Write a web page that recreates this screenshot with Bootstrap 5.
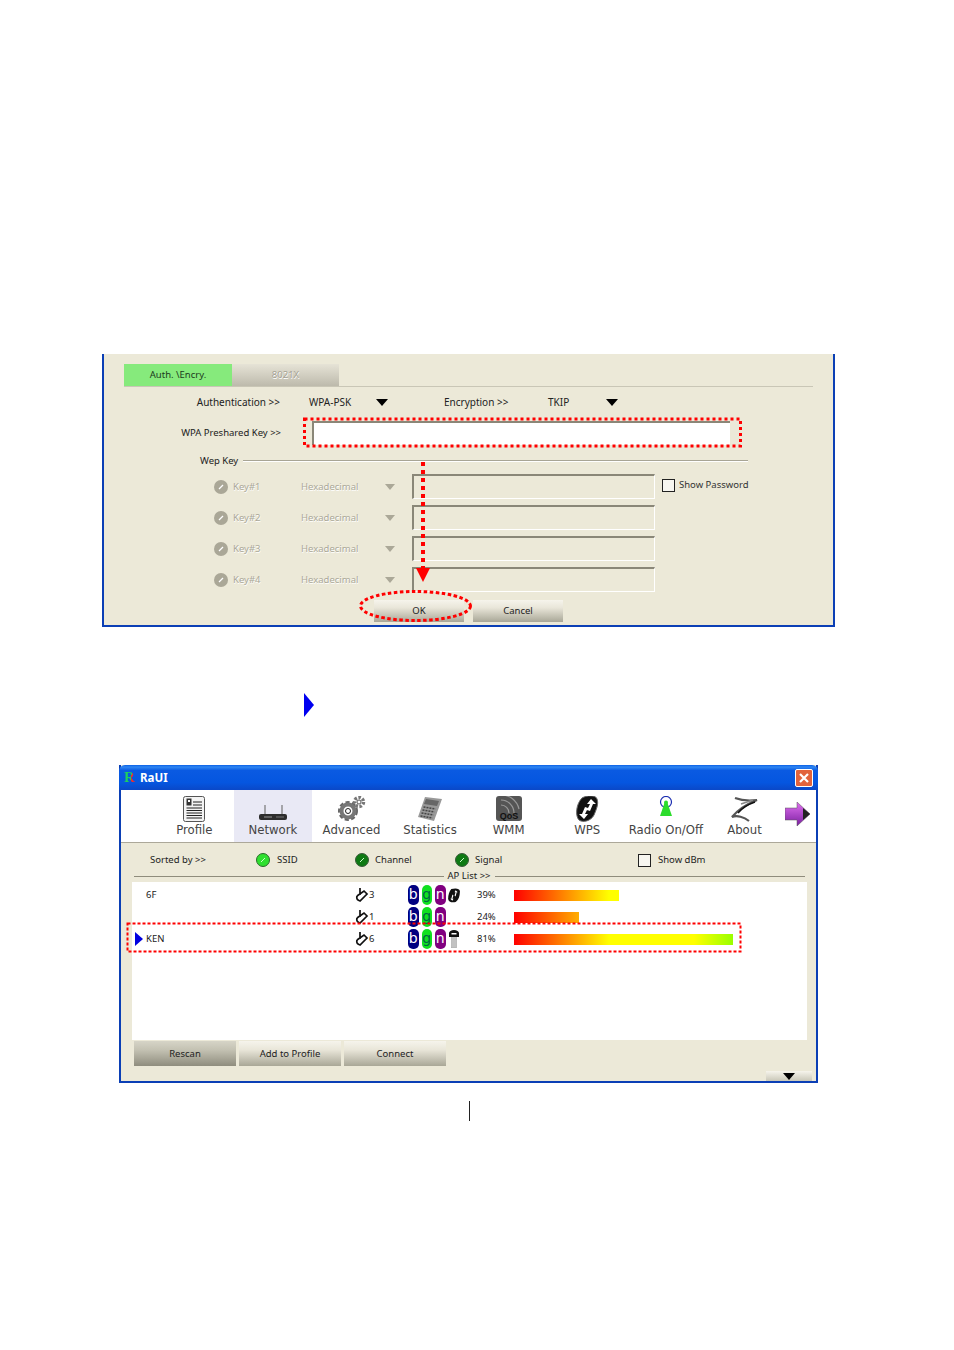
<!DOCTYPE html>
<html lang="en">
<head>
    <meta charset="UTF-8">
    <meta name="viewport" content="width=device-width, initial-scale=1.0">
    <title>RaUI</title>
    <link href="https://cdn.jsdelivr.net/npm/bootstrap@5.3.0/dist/css/bootstrap.min.css" rel="stylesheet">
    <style>
        body { background: #fff; color: #222; font-family: "Noto Sans", sans-serif; font-size: 9.5px; line-height: 1; }
        .sheet { width: 954px; height: 1350px; padding-top: 354px; overflow: hidden; }
        .dlg { background: #ece9d8; border: 2px solid #0b3fb5; border-top: 0; position: relative; }
        .dlg-auth { width: 733px; height: 273px; margin-left: 102px; padding: 10px 0 0 20px; }
        .dlg-ap { width: 699px; height: 318px; margin-left: 119px; }
        .overlay { position: absolute; left: 0; top: 0; pointer-events: none; }

        .tab-strip { width: 689px; height: 23px; border-bottom: 1px solid #c9c6b6; }
        .tab-on { width: 108px; background: #86ea7c; color: #1c3a1c; }
        .tab-off { width: 107px; background: linear-gradient(#e6e3d6, #bdbaac); color: #a5a294; text-shadow: .5px .5px 0 #fff; }
        .auth-row { height: 18px; margin-top: 6px; font-size: 10px; }
        .psk-row { height: 24px; margin-top: 10px; }
        .psk-label { width: 157px; }
        .psk-input { width: 418px; height: 24px; margin-left: 31px; background: #fff; border-top: 2px solid #8a8778; border-left: 2px solid #8a8778; }
        .wep-legend { height: 16px; margin-top: 8px; margin-left: 76px; width: 548px; gap: 5px; }
        .rule { height: 2px; background: #a8a595; border-bottom: 1px solid #fff; }
        .key-list { margin-top: 5px; gap: 6px; margin-left: 90px; }
        .key-row { height: 25px; color: #aba898; text-shadow: .5px .5px 0 #fff; }
        .key-input { width: 243px; height: 25px; margin-left: 17px; border-top: 2px solid #8a8778; border-left: 2px solid #8a8778; border-right: 1px solid #fff; border-bottom: 1px solid #fff; }
        .tickbox { width: 13px; height: 13px; background: #f7f6f0; border: 1px solid #222; flex: none; }
        .key-row .tickbox { margin: 0 0 3px 7px; }
        .show-pass { color: #333; margin: 0 0 3px 4px; text-shadow: none; }
        .xp-btn { background: linear-gradient(#f6f4ec, #e9e6d9 35%, #a9a797); border: 0; border-radius: 0; padding: 0; color: #222; font-size: 9.5px; line-height: 1; }
        .xp-btn:hover { background: linear-gradient(#f6f4ec, #e9e6d9 35%, #a9a797); color: #222; }
        .xp-btn.pressed { background: linear-gradient(#d6d4c7, #c4c2b3 35%, #8f8d7e); }
        .foot-btns { margin-top: 8px; margin-left: 250px; gap: 9px; }
        .foot-btns .xp-btn { width: 90px; height: 22px; }

        .mid-arrow { width: 0; height: 0; margin: 66px 0 48px 304px; border-left: 10px solid #0000f0; border-top: 12px solid transparent; border-bottom: 12px solid transparent; }

        .title-bar { height: 25px; margin: 0 -2px; padding: 0 4px 0 5px; border-radius: 6px 6px 0 0; background: linear-gradient(#0a5fe6 0, #2f86f2 8%, #0a5ae2 22%, #0556e0 70%, #0a48c8 100%); color: #fff; font-size: 11.5px; font-weight: 700; }
        .logo-r { background: linear-gradient(100deg, #1fd05a 62%, #e83030 62%); -webkit-background-clip: text; background-clip: text; color: transparent; font-family: "Liberation Serif", serif; font-size: 15px; margin-right: 5px; width: 11px; }
        .close-x { width: 18px; height: 18px; margin-left: auto; margin-right: 1px; background: #e2633c; border: 1px solid #fff; border-radius: 2px; }
        .tool-bar { height: 53px; background: #fff; border-bottom: 1px solid #aca899; padding-left: 34px; }
        .tool-cell { width: 78.6px; height: 52px; padding-top: 6px; font-family: "DejaVu Sans", sans-serif; font-size: 11.7px; color: #444; }
        .tool-cell.active { background: #e9e9f5; }
        .tool-cell span { margin-top: 3px; white-space: nowrap; }
        .tool-icon { width: 30px; height: 26px; display: block; }
        .next-arrow { margin-left: 1px; margin-top: 12px; }
        .filter-row { height: 27px; padding-top: 7px; }
        .radio-dot { width: 14px; height: 14px; display: block; flex: none; }
        .ap-legend { height: 12px; margin: 0 11px 0 13px; }
        .ap-legend span { padding: 0 4px 0 3px; }
        .ap-legend .rule { height: 1px; background: #8f8c7c; border: 0; }
        .ap-list { height: 158px; margin: 0 9px 0 11px; padding-top: 2px; background: #fff; }
        .ap-row { height: 22px; display: grid; grid-template-columns: 14px 209px 53px 69px 37px 1fr; align-items: center; }
        .cur-arrow { width: 0; height: 0; margin-left: 3px; border-left: 8px solid #0000e0; border-top: 7px solid transparent; border-bottom: 7px solid transparent; }
        .pill { width: 10.5px; height: 20px; margin-right: 3px; border-radius: 5px; font-size: 14px; font-family: "DejaVu Sans", sans-serif; color: #fff; padding-bottom: 3px; }
        .pill-b { background: #000080; }
        .pill-g { background: #10e020; color: #064; }
        .pill-n { background: #800080; }
        .sig-bar { height: 11px; background: linear-gradient(90deg, #f00 0, #ff0 95px, #ff0 180px, #9f0 219px) no-repeat; background-size: 219px 100%; }
        .foot-row { margin: 1px 0 0 13px; gap: 3px; }
        .foot-row .xp-btn { width: 102px; height: 25px; }
        .more-btn { width: 46px; height: 10px; margin: 5px 4px 0 auto; background: linear-gradient(#f6f4ec, #c9c7b8); }
        .caret-down { width: 0; height: 0; border-left: 6px solid transparent; border-right: 6px solid transparent; border-top: 7px solid #000; }
        .caret-grey { border-left-width: 5.5px; border-right-width: 5.5px; border-top: 6px solid #aba898; }
        .cut-mark { width: 1px; height: 20px; margin: 18px 0 0 469px; background: #222; }
    </style>
</head>
<body>
<div class="sheet">

    <!-- authentication dialog -->
    <div class="dlg dlg-auth">
        <div class="tab-strip d-flex">
            <div class="tab-on d-flex align-items-center justify-content-center">Auth. \Encry.</div>
            <div class="tab-off d-flex align-items-center justify-content-center">8021X</div>
        </div>

        <div class="auth-row d-flex align-items-center">
            <div class="text-end text-nowrap" style="width:156px">Authentication &gt;&gt;</div>
            <div style="width:67px;margin-left:29px">WPA-PSK</div>
            <div class="caret-down"></div>
            <div class="text-nowrap" style="width:65px;margin-left:56px">Encryption &gt;&gt;</div>
            <div style="width:58px;margin-left:39px">TKIP</div>
            <div class="caret-down"></div>
        </div>

        <div class="psk-row d-flex align-items-center">
            <div class="psk-label text-end text-nowrap">WPA Preshared Key &gt;&gt;</div>
            <div class="psk-input"></div>
        </div>

        <div class="wep-legend d-flex align-items-center">
            <span class="text-nowrap">Wep Key</span>
            <div class="rule flex-grow-1"></div>
        </div>

        <div class="key-list d-flex flex-column">
            <div class="key-row d-flex align-items-center">
                <svg class="radio-dot" viewBox="0 0 14 14"><circle cx="7" cy="7" r="7" fill="#aaa797"/><path d="M5 9l4-4" stroke="#fff" stroke-width="1.2"/></svg>
                <span style="width:68px;margin-left:5px">Key#1</span>
                <span style="width:84px">Hexadecimal</span>
                <div class="caret-down caret-grey"></div>
                <div class="key-input"></div>
                <div class="tickbox"></div>
                <span class="show-pass text-nowrap">Show Password</span>
            </div>
            <div class="key-row d-flex align-items-center">
                <svg class="radio-dot" viewBox="0 0 14 14"><circle cx="7" cy="7" r="7" fill="#aaa797"/><path d="M5 9l4-4" stroke="#fff" stroke-width="1.2"/></svg>
                <span style="width:68px;margin-left:5px">Key#2</span>
                <span style="width:84px">Hexadecimal</span>
                <div class="caret-down caret-grey"></div>
                <div class="key-input"></div>
            </div>
            <div class="key-row d-flex align-items-center">
                <svg class="radio-dot" viewBox="0 0 14 14"><circle cx="7" cy="7" r="7" fill="#aaa797"/><path d="M5 9l4-4" stroke="#fff" stroke-width="1.2"/></svg>
                <span style="width:68px;margin-left:5px">Key#3</span>
                <span style="width:84px">Hexadecimal</span>
                <div class="caret-down caret-grey"></div>
                <div class="key-input"></div>
            </div>
            <div class="key-row d-flex align-items-center">
                <svg class="radio-dot" viewBox="0 0 14 14"><circle cx="7" cy="7" r="7" fill="#aaa797"/><path d="M5 9l4-4" stroke="#fff" stroke-width="1.2"/></svg>
                <span style="width:68px;margin-left:5px">Key#4</span>
                <span style="width:84px">Hexadecimal</span>
                <div class="caret-down caret-grey"></div>
                <div class="key-input"></div>
            </div>
        </div>

        <div class="foot-btns d-flex">
            <button type="button" class="btn xp-btn">OK</button>
            <button type="button" class="btn xp-btn">Cancel</button>
        </div>

        <!-- red marks drawn over the dialog -->
        <svg class="overlay" width="733" height="273" viewBox="104 354 733 273">
            <rect x="304.5" y="419" width="436" height="27" fill="none" stroke="#f00" stroke-width="3" stroke-dasharray="3 3"/>
            <line x1="423" y1="462" x2="423" y2="570" stroke="#f00" stroke-width="4" stroke-dasharray="4 4"/>
            <polygon points="416,568 430,568 423,582" fill="#f00"/>
            <ellipse cx="415.5" cy="606" rx="55" ry="14.5" fill="none" stroke="#f00" stroke-width="3" stroke-dasharray="3.5 2.5"/>
        </svg>
    </div>

    <div class="mid-arrow"></div>

    <!-- access point list window -->
    <div class="dlg dlg-ap">
        <div class="title-bar d-flex align-items-center">
            <span class="logo-r">R</span><span>RaUI</span>
            <div class="close-x d-flex align-items-center justify-content-center">
                <svg width="12" height="12" viewBox="0 0 12 12"><path d="M2 2l8 8M10 2l-8 8" stroke="#fff" stroke-width="2.2"/></svg>
            </div>
        </div>

        <div class="tool-bar d-flex">
            <div class="tool-cell d-flex flex-column align-items-center">
                <svg class="tool-icon" viewBox="0 0 30 26"><rect x="4.5" y="0.5" width="21" height="25" rx="2" fill="#f4f4f4" stroke="#555"/><path d="M7.500 2.500h5v7h-5z" fill="#333"/><path d="M9 4h2v2h-2z" fill="#fff"/><path d="M14 6h9M14 9h9M7.500 12h15.500M7.500 14.500h15.500M7.500 17h15.500M7.500 19.500h15.500M7.500 22h15.500" stroke="#222" stroke-width="1.2"/></svg>
                <span>Profile</span>
            </div>
            <div class="tool-cell active d-flex flex-column align-items-center">
                <svg class="tool-icon" viewBox="0 0 30 26"><path d="M7 19v-10M24 19v-10" stroke="#777" stroke-width="1.200"/><rect x="1" y="18" width="28" height="6" rx="2" fill="#2d2d2d"/><path d="M6 21h8" stroke="#999"/><path d="M18 21h8" stroke="#777"/></svg>
                <span>Network</span>
            </div>
            <div class="tool-cell d-flex flex-column align-items-center">
                <svg class="tool-icon" viewBox="0 0 30 26">
                    <circle cx="12" cy="15" r="7.500" fill="none" stroke="#666" stroke-width="5" stroke-dasharray="3.500 2"/>
                    <circle cx="12" cy="15" r="6.500" fill="none" stroke="#777" stroke-width="4"/>
                    <circle cx="12" cy="15" r="2.500" fill="#fff" stroke="#222"/>
                    <circle cx="23" cy="6" r="4.500" fill="none" stroke="#777" stroke-width="3.500" stroke-dasharray="2.500 1.500"/>
                    <circle cx="23" cy="6" r="2" fill="#fff" stroke="#333" stroke-width=".8"/>
                </svg>
                <span>Advanced</span>
            </div>
            <div class="tool-cell d-flex flex-column align-items-center">
                <svg class="tool-icon" viewBox="0 0 30 26"><polygon points="10,1 27,3 19,25 3,21" fill="#999"/><polygon points="11,3 24,5 22,10 9,8" fill="#666"/><path d="M8.500 11l12 2M7.500 14l12 2M6.500 17l12 2M5.500 20l12 2" stroke="#444" stroke-width="1.500" stroke-dasharray="2 1"/></svg>
                <span>Statistics</span>
            </div>
            <div class="tool-cell d-flex flex-column align-items-center">
                <svg class="tool-icon" viewBox="0 0 30 26"><rect x="2" y="0" width="26" height="25" rx="3" fill="#555"/><path d="M6 14a8 8 0 0 1 8 8M6 9a13 13 0 0 1 13 13M6 4a18 18 0 0 1 18 14" fill="none" stroke="#999" stroke-width="1.200" transform="translate(1 -5)"/><text x="15" y="23" text-anchor="middle" font-family="Liberation Sans, sans-serif" font-size="9" font-weight="700" fill="#111">QoS</text></svg>
                <span>WMM</span>
            </div>
            <div class="tool-cell d-flex flex-column align-items-center">
                <svg class="tool-icon" viewBox="0 0 30 26"><path d="M10 2C15 -1 24 -1 25 3C27 8 24 14 22 19C19 25 11 27 7 24C3 20 4 8 10 2Z" fill="#111" stroke="#666"/><path d="M19 3l5 5h-3l-3 7-3-1 3-6h-3zM12 23l-5-5h3l3-7 3 1-3 6h3z" fill="#fff"/></svg>
                <span>WPS</span>
            </div>
            <div class="tool-cell d-flex flex-column align-items-center">
                <svg class="tool-icon" viewBox="0 0 30 26"><circle cx="15" cy="6" r="5.500" fill="#fff" stroke="#1a2cb0" stroke-width="1.200"/><polygon points="13.500,7 16.500,7 21,20 9,20" fill="#2cdc2c"/><circle cx="15" cy="6.500" r="2" fill="#2cdc2c"/></svg>
                <span>Radio On/Off</span>
            </div>
            <div class="tool-cell d-flex flex-column align-items-center">
                <svg class="tool-icon" viewBox="0 0 30 26"><path d="M6 2C14 5 20 5 28 4C18 8 8 15 3 21C8 19 15 21 20 25" fill="none" stroke="#555" stroke-width="2.200"/><path d="M9 17C14 11 20 8 26 6" fill="none" stroke="#111" stroke-width="1.500"/><path d="M12 8L24 4" stroke="#888" stroke-width="1.500"/></svg>
                <span>About</span>
            </div>
            <svg class="next-arrow" width="25" height="25" viewBox="0 0 25 25"><defs><linearGradient id="arrowFill" x1="0" y1="0" x2="0" y2="1"><stop offset="0" stop-color="#e070f0"/><stop offset="1" stop-color="#7a1fa0"/></linearGradient></defs><polygon points="0,6 12,6 12,0 25,12 12,24 12,18 0,18" fill="url(#arrowFill)" stroke="#555" stroke-width=".5"/><polygon points="18,6 25,12 18,18" fill="#222"/></svg>
        </div>

        <div class="filter-row d-flex align-items-center">
            <span class="text-nowrap" style="width:106px;margin-left:29px">Sorted by &gt;&gt;</span>
            <svg class="radio-dot" style="margin-right:7px" viewBox="0 0 14 14"><circle cx="7" cy="7" r="6.500" fill="#2fe02f" stroke="#2a6a2a"/><path d="M5 9l4-4" stroke="#cfc" stroke-width="1"/></svg>
            <span style="width:78px">SSID</span>
            <svg class="radio-dot" style="margin-right:6px" viewBox="0 0 14 14"><circle cx="7" cy="7" r="6.500" fill="#0f7a14" stroke="#3a5a3a"/><path d="M5 9l4-4" stroke="#cfc" stroke-width="1"/></svg>
            <span style="width:80px">Channel</span>
            <svg class="radio-dot" style="margin-right:6px" viewBox="0 0 14 14"><circle cx="7" cy="7" r="6.500" fill="#0f7a14" stroke="#3a5a3a"/><path d="M5 9l4-4" stroke="#cfc" stroke-width="1"/></svg>
            <span style="width:163px">Signal</span>
            <div class="tickbox"></div>
            <span class="text-nowrap" style="margin-left:7px">Show dBm</span>
        </div>

        <div class="ap-legend d-flex align-items-center">
            <div class="rule flex-grow-1"></div>
            <span class="text-nowrap">AP List &gt;&gt;</span>
            <div class="rule flex-grow-1"></div>
        </div>

        <div class="ap-list">
            <div class="ap-row">
                <div></div><div>6F</div>
                <div class="d-flex align-items-center">
                    <svg width="14" height="14" viewBox="0 0 14 14"><path d="M5 0V7M2 8Q1 12 5 13L12 6L9 3L2 8" fill="#fff" stroke="#111" stroke-width="1.700"/></svg><span>3</span>
                </div>
                <div class="d-flex align-items-center">
                    <div class="pill pill-b d-flex align-items-center justify-content-center">b</div>
                    <div class="pill pill-g d-flex align-items-center justify-content-center">g</div>
                    <div class="pill pill-n d-flex align-items-center justify-content-center">n</div>
                    <svg style="margin-left:-2px" width="14" height="15" viewBox="0 0 13 14"><path d="M4 1C7 0 12 0 12 3C12 7 11 11 8 13C5 14 1 13 1 10C1 7 2 3 4 1Z" fill="#111"/><path d="M8 2l2 2h-1l-1 4-1-1 1-3h-1zM5 12l-2-2h1l1-4 1 1-1 3h1z" fill="#fff"/></svg>
                </div>
                <div>39%</div>
                <div class="sig-bar" style="width:105px"></div>
            </div>
            <div class="ap-row">
                <div></div><div></div>
                <div class="d-flex align-items-center">
                    <svg width="14" height="14" viewBox="0 0 14 14"><path d="M5 0V7M2 8Q1 12 5 13L12 6L9 3L2 8" fill="#fff" stroke="#111" stroke-width="1.700"/></svg><span>1</span>
                </div>
                <div class="d-flex align-items-center">
                    <div class="pill pill-b d-flex align-items-center justify-content-center">b</div>
                    <div class="pill pill-g d-flex align-items-center justify-content-center">g</div>
                    <div class="pill pill-n d-flex align-items-center justify-content-center">n</div>
                </div>
                <div>24%</div>
                <div class="sig-bar" style="width:65px"></div>
            </div>
            <div class="ap-row">
                <div class="cur-arrow"></div><div>KEN</div>
                <div class="d-flex align-items-center">
                    <svg width="14" height="14" viewBox="0 0 14 14"><path d="M5 0V7M2 8Q1 12 5 13L12 6L9 3L2 8" fill="#fff" stroke="#111" stroke-width="1.700"/></svg><span>6</span>
                </div>
                <div class="d-flex align-items-center">
                    <div class="pill pill-b d-flex align-items-center justify-content-center">b</div>
                    <div class="pill pill-g d-flex align-items-center justify-content-center">g</div>
                    <div class="pill pill-n d-flex align-items-center justify-content-center">n</div>
                    <svg style="margin-left:-1px" width="12" height="18" viewBox="0 0 12 18"><rect x="3.500" y="6" width="5" height="12" fill="#c2c2c2" stroke="#999" stroke-width=".5"/><path d="M1 7V3a5 3 0 0 1 10 0v4z" fill="#111"/><rect x="3.500" y="3" width="5" height="1.500" fill="#fff"/></svg>
                </div>
                <div>81%</div>
                <div class="sig-bar" style="width:219px"></div>
            </div>
        </div>

        <div class="foot-row d-flex">
            <button type="button" class="btn xp-btn pressed">Rescan</button>
            <button type="button" class="btn xp-btn">Add to Profile</button>
            <button type="button" class="btn xp-btn">Connect</button>
        </div>

        <div class="more-btn d-flex align-items-center justify-content-center">
            <div class="caret-down"></div>
        </div>

        <svg class="overlay" width="699" height="318" viewBox="121 765 699 318">
            <rect x="127.500" y="923.500" width="613" height="28" fill="none" stroke="#f00" stroke-width="2" stroke-dasharray="3 2"/>
        </svg>
    </div>

    <div class="cut-mark"></div>
</div>

<script src="https://cdn.jsdelivr.net/npm/bootstrap@5.3.0/dist/js/bootstrap.bundle.min.js"></script>
</body>
</html>
